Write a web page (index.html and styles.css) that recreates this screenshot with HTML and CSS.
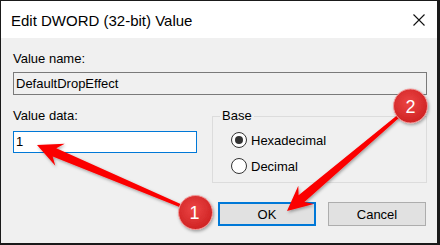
FILE: index.html
```html
<!DOCTYPE html>
<html>
<head>
<meta charset="utf-8">
<link rel="stylesheet" href="styles.css">
</head>
<body>
<div class="screen">
  <div class="dialog">
    <div class="titlebar">
      <span class="title">Edit DWORD (32-bit) Value</span>
      <svg class="close" width="12" height="12" viewBox="0 0 12 12"><path d="M0.5 0.5L11.5 11.5M11.5 0.5L0.5 11.5" stroke="#111" stroke-width="1.1" fill="none"/></svg>
    </div>
    <div class="content">
      <div class="lbl">Value name:</div>
      <div class="field readonly">DefaultDropEffect</div>
      <div class="row">
        <div class="col-left">
          <div class="lbl">Value data:</div>
          <div class="field active">1</div>
        </div>
        <fieldset class="base">
          <legend>Base</legend>
          <div class="radio"><span class="dot checked"></span><span>Hexadecimal</span></div>
          <div class="radio"><span class="dot"></span><span>Decimal</span></div>
        </fieldset>
      </div>
      <div class="buttons">
        <div class="btn default">OK</div>
        <div class="btn">Cancel</div>
      </div>
    </div>
  </div>
  <svg class="annot" width="440" height="245" viewBox="0 0 440 245">
    <defs>
      <filter id="sh" x="-20%" y="-20%" width="140%" height="140%">
        <feDropShadow dx="1" dy="1.5" stdDeviation="1.5" flood-color="#000" flood-opacity="0.35"/>
      </filter>
      <radialGradient id="cg" cx="45%" cy="40%" r="60%">
        <stop offset="0" stop-color="#ec4545"/>
        <stop offset="1" stop-color="#cf2323"/>
      </radialGradient>
    </defs>
    <polygon filter="url(#sh)" fill="#fb0000" points="37,145 64.7,143.7 56.3,148.3 185,206 183.8,208.8 52.7,156.5 55.3,165.8"/>
    <polygon filter="url(#sh)" fill="#fb0000" points="287,211 313.8,203.9 304.4,202.1 402.3,115 400.3,112.7 298.6,195.3 298.3,185.7"/>
    <g filter="url(#sh)">
      <circle cx="195.5" cy="212.5" r="17" fill="url(#cg)" stroke="#f29a9a" stroke-width="1"/>
      <circle cx="410.5" cy="106" r="17" fill="url(#cg)" stroke="#f29a9a" stroke-width="1"/>
    </g>
    <text class="num" x="194.5" y="218.5" text-anchor="middle">1</text>
    <text class="num" x="410.5" y="112.5" text-anchor="middle">2</text>
  </svg>
</div>
</body>
</html>
```
FILE: styles.css
```css
html, body {
  margin: 0;
  padding: 0;
  background: #ffffff;
}
.screen {
  position: relative;
  width: 440px;
  height: 245px;
  font-family: "Liberation Sans", Arial, sans-serif;
  color: #000;
}
.dialog {
  box-sizing: border-box;
  width: 440px;
  height: 245px;
  border-style: solid;
  border-color: #1a1a1a;
  border-width: 1px 3px 2px 1px;
  background: #f0f0f0;
  display: flex;
  flex-direction: column;
}
.titlebar {
  height: 37px;
  flex: none;
  background: #ffffff;
  display: flex;
  align-items: center;
  justify-content: space-between;
  padding: 0 12px 0 10px;
}
.title {
  font-size: 15px;
  line-height: 17px;
  margin-top: 1px;
}
.close {
  display: block;
  margin-top: 1px;
}
.content {
  padding: 13px 10px 0 12px;
  font-size: 13px;
}
.lbl {
  line-height: 15px;
}
.field {
  box-sizing: border-box;
  line-height: 21px;
  padding-left: 2px;
}
.field.readonly {
  margin-top: 6px;
  height: 23px;
  border: 1px solid #7a7a7a;
  background: #f0f0f0;
}
.field.active {
  margin-top: 8px;
  height: 22px;
  line-height: 20px;
  border: 1px solid #0078d7;
  background: #ffffff;
}
.row {
  display: flex;
  align-items: flex-start;
  gap: 15px;
  margin-top: 13px;
}
.col-left {
  width: 184px;
  flex: none;
}
.base {
  box-sizing: border-box;
  width: 215px;
  flex: none;
  margin: 1px 0 0 0;
  padding: 4px 0 3px 18px;
  border: 1px solid #dcdcdc;
  min-width: 0;
}
.base legend {
  margin-left: -11px;
  padding: 0 2px;
  line-height: 14px;
}
.radio {
  height: 26px;
  display: flex;
  align-items: center;
}
.dot {
  box-sizing: border-box;
  width: 16px;
  height: 16px;
  border-radius: 50%;
  border: 1.5px solid #333;
  background: #fff;
  margin-right: 4px;
  display: flex;
  align-items: center;
  justify-content: center;
}
.dot.checked::after {
  content: "";
  width: 8px;
  height: 8px;
  border-radius: 50%;
  background: #333;
}
.buttons {
  display: flex;
  justify-content: flex-end;
  gap: 12px;
  margin-top: 19px;
  padding-right: 1px;
}
.btn {
  box-sizing: border-box;
  width: 98px;
  height: 24px;
  background: #e1e1e1;
  border: 1px solid #adadad;
  display: flex;
  align-items: center;
  justify-content: center;
}
.btn.default {
  border: 2px solid #0078d7;
}
.annot {
  position: absolute;
  left: 0;
  top: 0;
}
.num {
  font-family: "Liberation Sans", Arial, sans-serif;
  font-size: 18px;
  fill: #ffffff;
}
```
